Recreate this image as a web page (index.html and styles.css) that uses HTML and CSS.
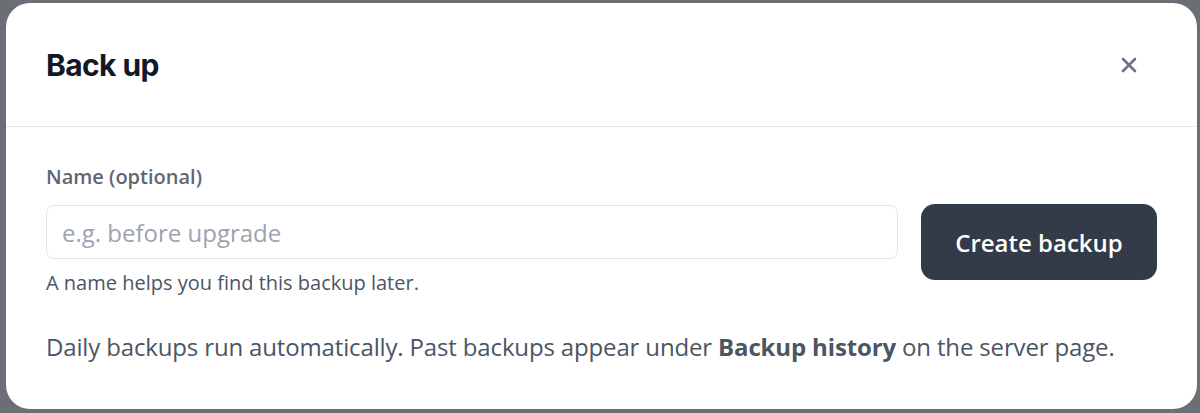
FILE: index.html
```html
<!DOCTYPE html>
<html lang="en">
<head>
<meta charset="utf-8">
<title>Back up</title>
<link rel="stylesheet" href="styles.css">
</head>
<body>
<div class="backdrop">
  <div class="modal">
    <div class="modal-header">
      <h2 class="modal-title">Back up</h2>
      <button class="close" aria-label="Close">
        <svg width="16" height="16" viewBox="0 0 16 16" fill="none" stroke="currentColor" stroke-width="2.6" stroke-linecap="round"><path d="M2 2 L14 14 M14 2 L2 14"/></svg>
      </button>
    </div>
    <div class="modal-body">
      <div class="form-row">
        <div class="field">
          <label class="label" for="name">Name (optional)</label>
          <input id="name" class="input" type="text" placeholder="e.g. before upgrade">
          <div class="hint">A name helps you find this backup later.</div>
        </div>
        <button class="primary">Create backup</button>
      </div>
      <p class="note">Daily backups run automatically. Past backups appear under <strong>Backup history</strong> on the server page.</p>
    </div>
  </div>
</div>
</body>
</html>
```

FILE: styles.css
```css
* { box-sizing: border-box; }
html, body { margin: 0; padding: 0; }
body {
  width: 1200px;
  height: 413px;
  background: #6b6e75;
  font-family: "Open Sans", Lato, sans-serif;
  overflow: hidden;
}
.backdrop {
  padding: 3px 3px 4px 6px;
  height: 413px;
}
.modal {
  background: #ffffff;
  border-radius: 24px;
  height: 406px;
  width: 1191px;
}
.modal-header {
  display: flex;
  align-items: center;
  justify-content: space-between;
  height: 124px;
  border-bottom: 1px solid #e5e7eb;
  padding: 0 60px 0 40px;
}
.modal-title {
  margin: 0;
  font-family: Inter, sans-serif;
  font-weight: 700;
  font-size: 30px;
  letter-spacing: -0.6px;
  color: #111827;
}
.close {
  background: none;
  border: 0;
  padding: 0;
  color: #6b7280;
  display: flex;
  cursor: pointer;
}
.modal-body {
  padding: 36px 40px 0 40px;
}
.form-row {
  display: flex;
  align-items: flex-start;
  gap: 23px;
}
.field {
  flex: 1;
  display: flex;
  flex-direction: column;
}
.label {
  font-size: 20px;
  font-weight: 600;
  color: #5f6673;
  line-height: 28px;
  margin-bottom: 14px;
}
.input {
  height: 54px;
  border: 1px solid #e2e4e8;
  border-radius: 8px;
  padding: 0 15px;
  font-family: inherit;
  font-size: 24px;
  color: #111827;
  outline: none;
}
.input::placeholder { color: #9ca3af; }
.hint {
  margin-top: 10px;
  font-size: 20px;
  color: #4b5563;
  line-height: 28px;
}
.primary {
  margin-top: 41px;
  width: 236px;
  height: 76px;
  border: 0;
  border-radius: 14px;
  background: #333a48;
  color: #ffffff;
  font-family: inherit;
  font-size: 24px;
  font-weight: 600;
  cursor: pointer;
}
.note {
  margin: 34px 0 0 0;
  font-size: 24px;
  letter-spacing: -0.15px;
  line-height: 32px;
  color: #4b5563;
}
.note strong { font-weight: 700; }
```
